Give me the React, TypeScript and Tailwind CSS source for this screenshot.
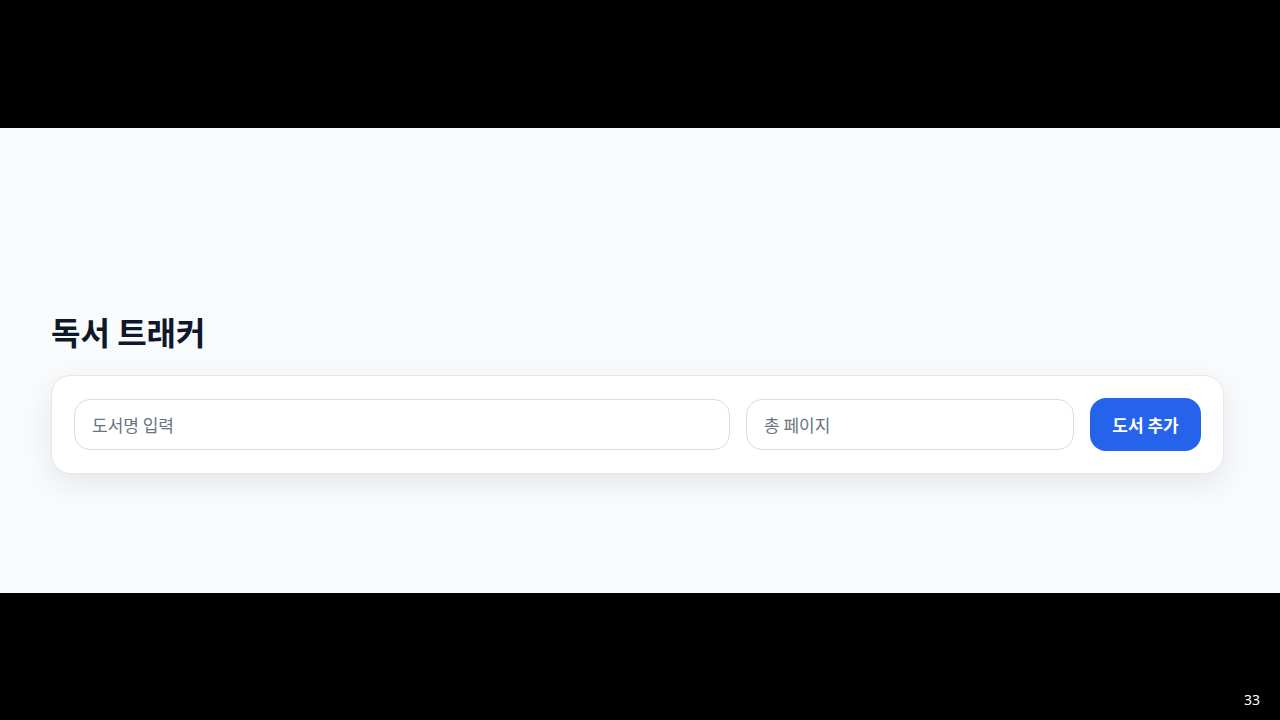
import React from "react";

export default function App() {
  const font = { fontFamily: '"Noto Sans CJK KR", "Noto Sans", sans-serif' };
  return (
    <div className="w-[1280px] h-[720px] bg-black flex flex-col" style={font}>
      <div className="h-[128px] shrink-0" />
      <div className="h-[465px] shrink-0 bg-[#f8fafc] pl-[51px] pr-[56px] pt-[185px]">
        <h1 className="text-[32px] leading-[36px] font-bold text-[#0f172a]">독서 트래커</h1>
        <div className="mt-[26px] bg-white border border-[#e5e7eb] rounded-[20px] shadow-[0_10px_30px_rgba(15,23,42,0.08)] px-[22px] py-[22px] grid grid-cols-[2fr_1fr_111px] items-center gap-4">
          <input
            className="w-full min-w-0 h-[51px] rounded-2xl border border-[#d6dbee] px-[17px] text-[17px] text-[#111827] placeholder:text-[#6b7280] outline-none bg-white"
            placeholder="도서명 입력"
            style={font}
          />
          <input
            className="w-full min-w-0 h-[51px] rounded-2xl border border-[#d6dbee] px-[17px] text-[17px] text-[#111827] placeholder:text-[#6b7280] outline-none bg-white"
            placeholder="총 페이지"
            style={font}
          />
          <button
            className="w-[111px] h-[53px] rounded-2xl bg-[#2563eb] text-white font-bold text-[17px]"
            style={font}
          >
            도서 추가
          </button>
        </div>
      </div>
      <div className="flex-1 flex justify-end items-end pr-[20px] pb-[12px]">
        <span className="text-white text-[14px] leading-[16px]" style={{ fontFamily: '"Noto Sans", sans-serif' }}>33</span>
      </div>
    </div>
  );
}
